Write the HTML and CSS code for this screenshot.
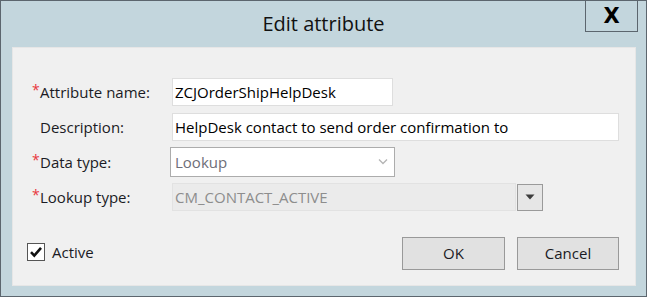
FILE: index.html
```html
<!DOCTYPE html>
<html>
<head>
  <meta charset="utf-8">
  <title>Edit attribute</title>
  <link rel="stylesheet" href="styles.css">
</head>
<body>
  <div class="window">
    <!-- Title bar -->
    <div class="titlebar">
      <span></span>
      <div class="title">Edit attribute</div>
      <button class="close">X</button>
    </div>

    <div class="panel">
      <div class="form">
        <label class="label"><span class="req">*</span>Attribute name:</label>
        <div class="field"><input class="text name" type="text" value="ZCJOrderShipHelpDesk"></div>

        <label class="label"><span class="req"></span>Description:</label>
        <div class="field"><input class="text desc" type="text" value="HelpDesk contact to send order confirmation to"></div>

        <label class="label"><span class="req">*</span>Data type:</label>
        <div class="field">
          <div class="combo">
            <span>Lookup</span>
            <svg width="10" height="7" viewBox="0 0 10 7"><path d="M1 1.5 L5 5.5 L9 1.5" fill="none" stroke="#b4b4b4" stroke-width="1.3"/></svg>
          </div>
        </div>

        <label class="label"><span class="req">*</span>Lookup type:</label>
        <div class="field">
          <div class="lookup">CM_CONTACT_ACTIVE</div>
          <div class="dropbtn">
            <svg width="10" height="6" viewBox="0 0 10 6"><path d="M0.5 0.5 L9.5 0.5 L5 5.5 Z" fill="#3c3c3c"/></svg>
          </div>
        </div>
      </div>

      <!-- Footer: active flag and buttons -->
      <div class="footer">
        <label class="check">
          <span class="box">
            <svg width="14" height="14" viewBox="0 0 14 14"><path d="M2 7.2 L5.3 10.6 L12 2.8" fill="none" stroke="#111" stroke-width="2.6"/></svg>
          </span>
          Active
        </label>
        <div class="buttons">
          <button class="btn ok">OK</button>
          <button class="btn cancel">Cancel</button>
        </div>
      </div>
    </div>
  </div>
</body>
</html>
```

FILE: styles.css
```css
body {
  margin: 0;
  padding: 0;
  font-family: "Open Sans", "Noto Sans", sans-serif;
  background-color: #c3d6dd;
}
.window {
  width: 647px;
  height: 297px;
  box-sizing: border-box;
  border: 1px solid #5c666e;
  background-color: #c3d6dd;
  display: flex;
  flex-direction: column;
}
.titlebar {
  height: 46px;
  display: grid;
  grid-template-columns: 1fr auto 1fr;
  align-items: center;
}
.title {
  font-size: 20px;
  color: #111;
  padding-bottom: 1px;
}
.close {
  justify-self: end;
  align-self: start;
  width: 53px;
  height: 32px;
  margin: -1px 8px 0 0;
  border: 1px solid #5c666e;
  background-color: #c3d6dd;
  font-family: "DejaVu Sans", sans-serif;
  font-weight: bold;
  font-size: 21px;
  color: #000;
  padding: 0;
  line-height: 28px;
}
.panel {
  flex: 1;
  margin: 0 10px 10px 11px;
  background-color: #f0f0f0;
  border: 1px solid #e6e6e6;
  padding: 30px 16px 0 14px;
}
.form {
  display: grid;
  grid-template-columns: 140px 1fr;
  grid-auto-rows: 28px;
  row-gap: 7px;
  align-items: center;
  padding-left: 5px;
  font-size: 15px;
}
.label {
  display: flex;
  color: #1b1b24;
}
.req {
  width: 8px;
  color: #e8383d;
  font-size: 14px;
  position: relative;
  top: -2px;
}
.field {
  display: flex;
  align-items: center;
  height: 28px;
}
.text {
  box-sizing: border-box;
  height: 28px;
  border: 1px solid #dedede;
  background-color: #fff;
  font-family: "Open Sans", "Noto Sans", sans-serif;
  font-size: 15px;
  color: #000;
  padding: 0 2px 1px;
  margin: 0;
  outline: none;
}
.text.name {
  width: 221px;
}
.text.desc {
  width: 447px;
}
.combo {
  box-sizing: border-box;
  width: 225px;
  height: 30px;
  margin-left: -2px;
  border: 1px solid #acacac;
  background-color: #fff;
  display: flex;
  align-items: center;
  justify-content: space-between;
  padding: 0 6px 1px 4px;
  color: #6e6e78;
}
.lookup {
  box-sizing: border-box;
  width: 344px;
  height: 28px;
  border: 1px solid #e2e2e2;
  background-color: #ebebeb;
  color: #8d8d8d;
  padding: 0 2px 1px;
  display: flex;
  align-items: center;
}
.dropbtn {
  box-sizing: border-box;
  width: 26px;
  height: 27px;
  margin-left: 1px;
  border: 1px solid #9a9a9a;
  background-color: #e6e6e6;
  display: flex;
  align-items: center;
  justify-content: center;
}
.footer {
  display: flex;
  justify-content: space-between;
  align-items: center;
  margin-top: 26px;
  font-size: 15px;
}
.check {
  display: flex;
  align-items: center;
  gap: 7px;
  color: #1b1b24;
  padding-bottom: 4px;
}
.box {
  box-sizing: border-box;
  width: 18px;
  height: 18px;
  border: 1px solid #555;
  background-color: #fff;
  display: flex;
  align-items: center;
  justify-content: center;
}
.buttons {
  display: flex;
  gap: 12px;
}
.btn {
  box-sizing: border-box;
  height: 33px;
  border: 1px solid #999;
  background-color: #e1e1e1;
  font-family: "Open Sans", "Noto Sans", sans-serif;
  font-size: 15px;
  color: #1b1b24;
  padding: 0 0 2px;
}
.btn.ok {
  width: 103px;
}
.btn.cancel {
  width: 102px;
}
```
